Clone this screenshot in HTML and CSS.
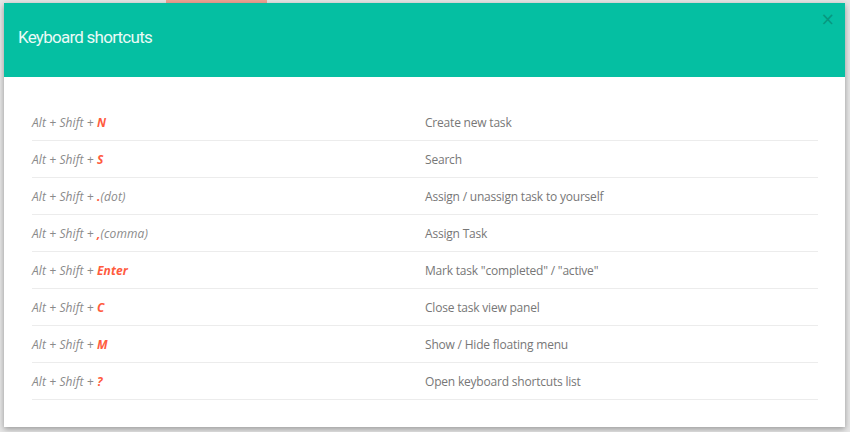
FILE: index.html
```html
<!DOCTYPE html>
<html lang="en">
<head>
    <meta charset="UTF-8">
    <meta name="viewport" content="width=device-width, initial-scale=1.0">
    <title>Keyboard shortcuts</title>
    <link rel="stylesheet" href="styles.css">
</head>
<body>
<div class="backdrop">
    <div class="tab-hint"></div>
    <div class="modal">
        <div class="modal-header">
            <h2>Keyboard shortcuts</h2>
            <span class="close">&times;</span>
        </div>
        <div class="modal-body">
            <table class="shortcuts">
                <tbody>
                    <tr><td class="keys">Alt + Shift + <b>N</b></td><td>Create new task</td></tr>
                    <tr><td class="keys">Alt + Shift + <b>S</b></td><td>Search</td></tr>
                    <tr><td class="keys">Alt + Shift + <b>.</b>(dot)</td><td>Assign / unassign task to yourself</td></tr>
                    <tr><td class="keys">Alt + Shift + <b>,</b>(comma)</td><td>Assign Task</td></tr>
                    <tr><td class="keys">Alt + Shift + <b>Enter</b></td><td>Mark task "completed" / "active"</td></tr>
                    <tr><td class="keys">Alt + Shift + <b>C</b></td><td>Close task view panel</td></tr>
                    <tr><td class="keys">Alt + Shift + <b>M</b></td><td>Show / Hide floating menu</td></tr>
                    <tr><td class="keys">Alt + Shift + <b>?</b></td><td>Open keyboard shortcuts list</td></tr>
                </tbody>
            </table>
        </div>
    </div>
</div>
</body>
</html>
```

FILE: styles.css
```css
body {
    margin: 0;
    padding: 0;
    font-family: "Open Sans", Arial, sans-serif;
    background-color: #e6e6e6;
}
.backdrop {
    position: relative;
    height: 432px;
    padding-top: 3px;
    box-sizing: border-box;
    overflow: hidden;
}
.tab-hint {
    position: absolute;
    top: 0;
    left: 166px;
    width: 101px;
    height: 3px;
    background: #f1a293;
}
.modal {
    position: relative;
    margin: 0 5px 0 4px;
    height: 424px;
    background: white;
    box-shadow: 0 2px 6px rgba(0, 0, 0, 0.35);
}
.modal-header {
    position: relative;
    height: 74px;
    background-color: #05bfa2;
    display: flex;
    align-items: center;
    padding: 0 14px;
}
.modal-header h2 {
    margin: 0 0 6px;
    font-family: Roboto, sans-serif;
    font-weight: 400;
    font-size: 17px;
    letter-spacing: -0.75px;
    color: #eafaf6;
}
.close {
    position: absolute;
    top: 6px;
    right: 10px;
    font-family: "DejaVu Sans", sans-serif;
    font-size: 17px;
    color: #07987f;
}
.modal-body {
    padding: 27px 27px 0 28px;
}
.shortcuts {
    width: 100%;
    border-collapse: collapse;
    font-size: 12px;
    color: #777;
    letter-spacing: -0.2px;
}
.shortcuts td {
    height: 36px;
    padding: 0;
    border-bottom: 1px solid #ececec;
    vertical-align: middle;
}
.shortcuts td.keys {
    width: 393px;
    font-style: italic;
    color: #8a8a8a;
    letter-spacing: 0.1px;
}
.shortcuts td.keys b {
    color: #ff5b3e;
    font-weight: 700;
}
```
